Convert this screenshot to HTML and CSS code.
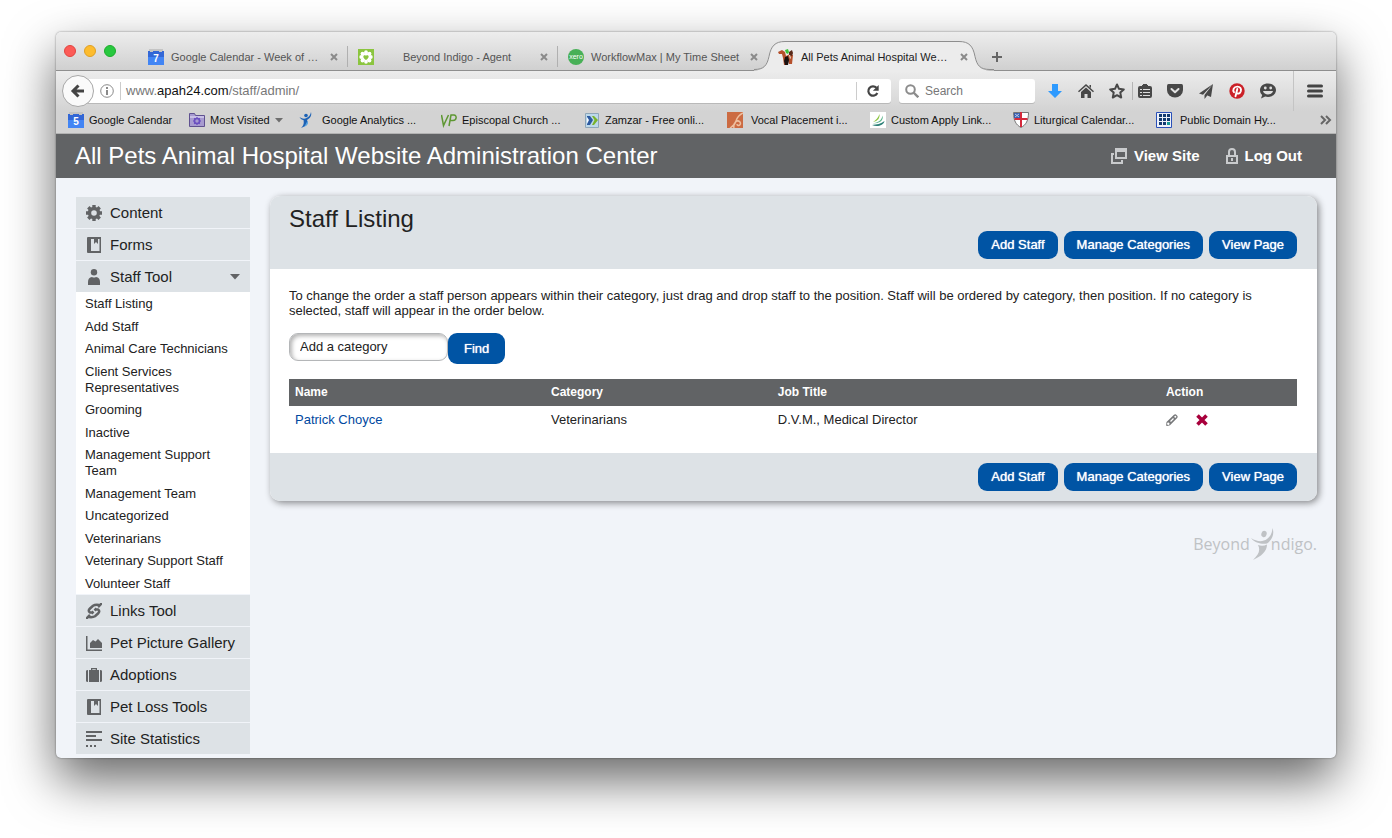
FILE: index.html
```html
<!DOCTYPE html>
<html lang="en">
<head>
<meta charset="utf-8">
<title>All Pets Animal Hospital Website Administration Center</title>
<link rel="stylesheet" href="styles.css">
</head>
<body>
<div class="window">
  <div class="tabstrip">
    <div class="lights">
      <button class="light light-red" aria-label="Close window"></button>
      <button class="light light-yellow" aria-label="Minimize window"></button>
      <button class="light light-green" aria-label="Zoom window"></button>
    </div>
    <div class="tab">
      <svg class="fav" viewBox="0 0 16 16"><path fill="#c4c4c4" d="M1 0h14v4H1z"/><path fill="#3367d6" d="M0 2h2v1h3V2h6v1h3V2h2v6H0z"/><path fill="#4285f4" d="M0 8h16v8H0z"/><text x="8" y="13" class="cal-num">7</text></svg>
      <span class="tab-title">Google Calendar - Week of …</span>
      <button class="tab-close" aria-label="Close tab"><svg viewBox="0 0 8 8"><path d="M1 1l6 6M7 1L1 7"/></svg></button>
    </div>
    <div class="tab">
      <svg class="fav" viewBox="0 0 16 16"><path fill="#8bc53f" d="M0 0h16v16H0z"/><g fill="#fff"><circle cx="8" cy="3.200" r="1.900"/><circle cx="11.500" cy="4.600" r="1.900"/><circle cx="12.800" cy="8" r="1.900"/><circle cx="11.500" cy="11.500" r="1.900"/><circle cx="8" cy="12.800" r="1.900"/><circle cx="4.500" cy="11.500" r="1.900"/><circle cx="3.200" cy="8" r="1.900"/><circle cx="4.500" cy="4.600" r="1.900"/><circle cx="8" cy="8" r="4"/></g><path fill="#8bc53f" d="M8 11C3.500 8.500 5.500 5 8 6.800c2.500-1.800 4.500 1.700 0 4.200z"/></svg>
      <span class="tab-title tab-title-center">Beyond Indigo - Agent</span>
      <button class="tab-close" aria-label="Close tab"><svg viewBox="0 0 8 8"><path d="M1 1l6 6M7 1L1 7"/></svg></button>
    </div>
    <div class="tab tab-last">
      <svg class="fav" viewBox="0 0 16 16"><circle cx="8" cy="8" r="8" fill="#48b057"/><text x="8" y="10" class="xero">xero</text></svg>
      <span class="tab-title">WorkflowMax | My Time Sheet</span>
      <button class="tab-close" aria-label="Close tab"><svg viewBox="0 0 8 8"><path d="M1 1l6 6M7 1L1 7"/></svg></button>
    </div>
    <div class="tab tab-active">
      <svg class="tab-shape" viewBox="0 0 240 30" aria-hidden="true"><path fill="#ececec" d="M0 30v-.5c10 0 13-5 15-14C17 5 21 .5 31 .5h174c10 0 14 4.500 16 15 2 9 5 14 15 14h4v.5z"/><path fill="none" stroke="#8e8e8e" d="M0 28.500c10 0 13-4 15-13C17 5 21 .5 31 .5h174c10 0 14 4.500 16 15 2 9 5 13 15 13h4"/></svg>
      <svg class="fav" viewBox="0 0 16 16"><path fill="#b5502c" d="M0 3l4-2 3 2 1 4 4-2 3 1-1 9h-3l-1-4-2 5H6L5 9 4 5 1 5z"/><path fill="#5a2a1a" d="M11 3l3-2 1 3-1 3-3-1z"/><path fill="#3cc43c" d="M7 1l3-1 1 3-1 2-2-1z"/><path fill="#181010" d="M7 8l3-1 1 4-1 5H7L6 12z"/><path fill="#e8d8c8" d="M11 6h1l1 3-1 1z"/></svg>
      <span class="tab-title">All Pets Animal Hospital We…</span>
      <button class="tab-close" aria-label="Close tab"><svg viewBox="0 0 8 8"><path d="M1 1l6 6M7 1L1 7"/></svg></button>
    </div>
    <button class="new-tab" aria-label="New tab"><svg viewBox="0 0 12 12"><path d="M6 1v10M1 6h10"/></svg></button>
  </div>

  <div class="toolbar">
    <button class="back" aria-label="Back"><svg viewBox="0 0 16 16"><path d="M14 8H3.500M8.500 2.500L3 8l5.500 5.500"/></svg></button>
    <div class="urlbar">
      <svg class="info" viewBox="0 0 14 14"><circle cx="7" cy="7" r="6.300" fill="none" stroke="#8a8a8a"/><path fill="#8a8a8a" d="M6 3h2v2H6zM6 6h2v5H6z"/></svg>
      <div class="url" role="textbox" aria-label="Address">www.<span class="url-host">apah24.com</span>/staff/admin/</div>
      <button class="reload" aria-label="Reload"><svg viewBox="0 0 14 14"><path fill="none" stroke="#444" stroke-width="2.200" d="M10.500 3.800A4.700 4.700 0 1 0 11.300 9"/><path fill="#444" d="M12.700 1v5.800H6.900z"/></svg></button>
    </div>
    <label class="search">
      <svg viewBox="0 0 14 14"><circle cx="5.500" cy="5.500" r="4.300" fill="none" stroke="#8c8c8c" stroke-width="2"/><path stroke="#8c8c8c" stroke-width="2.400" d="M8.500 8.500l4.800 4.800"/></svg>
      <input type="search" placeholder="Search" aria-label="Search">
    </label>
    <div class="tools">
      <button class="tool" aria-label="Downloads"><svg viewBox="0 0 16 16"><path fill="#2e9afe" d="M5 1h6v7h4l-7 7-7-7h4z"/></svg></button>
      <button class="tool" aria-label="Home"><svg viewBox="0 0 16 16"><path fill="#484848" d="M8 1l8 7.200-1 1L8 3 1 9.200l-1-1zM3 9l5-4.500L13 9v6H9.500v-4h-3v4H3zM11.500 2H13v3l-1.500-1.300z"/></svg></button>
      <button class="tool" aria-label="Bookmark this page"><svg viewBox="0 0 16 16"><path fill="none" stroke="#484848" stroke-width="2" stroke-linejoin="round" d="M8 1.500l2 4.300 4.800.6-3.500 3.200.9 4.900L8 12.200l-4.200 2.300.9-4.900L1.200 6.400 6 5.800z"/></svg></button>
      <button class="tool tool-list" aria-label="Bookmarks list"><svg viewBox="0 0 16 16"><path fill="#484848" fill-rule="evenodd" d="M3 3h2V2h1V1h4v1h1v1h2q2 0 2 2v8q0 2-2 2H3q-2 0-2-2V5q0-2 2-2zm0 3v1h2V6zm3 0v1h7V6zM3 9v1h2V9zm3 0v1h7V9zm-3 3v1h2v-1zm3 0v1h7v-1z"/></svg></button>
      <button class="tool" aria-label="Pocket"><svg viewBox="0 0 16 16"><path fill="#484848" d="M1.500 1h13Q16 1 16 3v4a8 7.500 0 0 1-16 0V3q0-2 1.500-2z"/><path fill="none" stroke="#e4e4e4" stroke-width="2" stroke-linecap="round" stroke-linejoin="round" d="M4.500 6L8 9.300 11.500 6"/></svg></button>
      <button class="tool" aria-label="Send"><svg viewBox="0 0 16 16"><path fill="#484848" d="M15 1L1 10.500l4 1.200zM15 1L6.500 12v4l2.200-2.800zM15 1L8.200 12l4.800 2z"/></svg></button>
      <button class="tool" aria-label="Pin it"><svg viewBox="0 0 16 16"><circle cx="8" cy="8" r="7.700" fill="#cb2027"/><path fill="none" stroke="#fff" stroke-width="1.900" stroke-linecap="round" d="M5 9.300C3.400 7 4.700 3.600 8.300 3.600c3 0 4.200 2.400 3.500 4.600-.9 2.600-3 3-4.300 1.600M8.300 6L6.500 13.300"/></svg></button>
      <button class="tool" aria-label="Chat"><svg viewBox="0 0 16 16"><path fill="#484848" d="M8 .5c4.500 0 8 2.700 8 6.500 0 3.900-3.500 7-8 7-1 0-2-.1-2.800-.4L1 15.500 2.200 12C.8 10.900 0 9.200 0 7 0 3.200 3.500.5 8 .5z"/><circle cx="5.300" cy="5" r="1.400" fill="#e0e0e0"/><circle cx="10.700" cy="5" r="1.400" fill="#e0e0e0"/><path fill="#e0e0e0" d="M3 8h10c-.8 4.500-9.200 4.500-10 0z"/></svg></button>
    </div>
    <button class="menu" aria-label="Open menu"><svg viewBox="0 0 16 14"><path stroke="#444" stroke-width="3" stroke-linecap="round" d="M1.500 2h13M1.500 7h13M1.500 12h13"/></svg></button>
  </div>

  <nav class="bookmarks" aria-label="Bookmarks">
    <a class="bm bm-auto" href="#"><svg class="fav" viewBox="0 0 16 16"><path fill="#c4c4c4" d="M1 0h14v4H1z"/><path fill="#3367d6" d="M0 2h2v1h3V2h6v1h3V2h2v6H0z"/><path fill="#4285f4" d="M0 8h16v8H0z"/><text x="8" y="13" class="cal-num">5</text></svg>Google Calendar</a>
    <a class="bm bm-folder" href="#"><svg class="fav" viewBox="0 0 16 16"><path fill="#a79bd0" stroke="#5f5190" d="M.5 14.500v-13h5l1 2h9v11z"/><path fill="#c9c1e6" d="M1 4h14v2H1z"/><circle cx="8" cy="9" r="2.500" fill="none" stroke="#6a4fc0" stroke-width="1.600"/><path stroke="#6a4fc0" stroke-width="1.200" d="M8 5v1.500M8 11.500V13M4 9h1.500M10.500 9H12M5.200 6.200l1 1M9.800 10.800l1 1M10.800 6.200l-1 1M6.200 10.800l-1 1"/></svg>Most Visited<svg class="caret" viewBox="0 0 8 5"><path fill="#6e6e6e" d="M0 0h8L4 4.500z"/></svg></a>
    <a class="bm bm-spaced" href="#"><svg class="fav" viewBox="0 0 16 16"><circle cx="8" cy="3.500" r="1.800" fill="#1d62b5"/><path fill="#1d62b5" d="M13 0c1 4-1 6-4 8 2 4-1 6-6 8 3-3 3-5 2.500-8C4 8 2.500 7 1.500 5c3 2 5 2 7 1 2.500-1 4-3 4.500-6z"/><path fill="#5aa5e0" d="M9.500 9c1.500 3-1 5-3.500 5.800 2-2 2-4 3.500-5.800z"/></svg>Google Analytics ...</a>
    <a class="bm" href="#"><svg class="fav" viewBox="0 0 16 16"><path fill="none" stroke="#5d9732" stroke-width="1.500" d="M.5 3l2 10.500L7.500 3M8 14l2-11h3c3 0 3 5.500-1 5.500H9.200"/></svg>Episcopal Church ...</a>
    <a class="bm" href="#"><svg class="fav" viewBox="0 0 16 16"><path fill="#bcd8ea" stroke="#8ea6b8" d="M1.500 1.500h13v14h-13z"/><path fill="#2c5aa0" d="M3 4h3l3 4-3 5H3z"/><path fill="#f4faff" d="M3 5l2 3-2 4z"/><path fill="#7ab32a" d="M8 4h2l4 4-4 5H8l2.500-5z"/></svg>Zamzar - Free onli...</a>
    <a class="bm bm-spaced" href="#"><svg class="fav" viewBox="0 0 16 16"><path fill="#cc6b42" d="M0 0h16v16H0z"/><path fill="none" stroke="#eebf9f" stroke-width="1.500" d="M16 1C12 3 10 6 9 9c-1 4-3 5-6 7M7 16c-1-5 3-9 6-6 2 3-3 5-3 2"/></svg>Vocal Placement i...</a>
    <a class="bm" href="#"><svg class="fav" viewBox="0 0 16 16"><path fill="#fff" d="M0 0h16v16H0z"/><path fill="#8cc63f" d="M3 10c3-2 5-4 6.500-8 .5 4-1.500 7-6.500 8z"/><path fill="#5cb58c" d="M2.500 11.500c6-1 9-3 10-8 1.500 5-3 8-10 8z"/><path fill="#2c7f77" d="M2 13c5-.5 9-1 12.500-4-1 5-8 6-12.500 4z"/></svg>Custom Apply Link...</a>
    <a class="bm" href="#"><svg class="fav" viewBox="0 0 16 16"><path fill="#fff" stroke="#777" d="M.5.500h15c0 8-2.500 12.500-7.500 15C3 13 .5 8.500.5.500z"/><path fill="#3a5fae" d="M1 1h6v5H1z"/><path stroke="#d42a3c" stroke-width="2" d="M8 0v15M1.500 7h13"/><path stroke="#b9c8ea" d="M2 2l4 3M6 2L2 5"/></svg>Liturgical Calendar...</a>
    <a class="bm bm-spaced" href="#"><svg class="fav" viewBox="0 0 16 16"><path fill="#eef2fa" stroke="#2a50b8" d="M.5.500h15v15H.5z"/><path fill="#123a70" d="M3 2h3v3H3zM7 2h3v3H7zM11 2h3v3h-3zM3 6h3v3H3zM7 6h3v3H7zM11 6h3v3h-3zM3 10h3v3H3zM7 10h3v3H7z"/><path fill="#139a94" d="M11 10h3v3h-3z"/></svg>Public Domain Hy...</a>
    <button class="more" aria-label="More bookmarks"><svg viewBox="0 0 12 10"><path d="M1 1l4 4-4 4M6 1l4 4-4 4"/></svg></button>
  </nav>

  <header class="site-head">
    <h1>All Pets Animal Hospital Website Administration Center</h1>
    <nav class="site-links">
      <a href="#"><svg class="ico-view" viewBox="0 0 16 16"><path fill="#c9cbcd" fill-rule="evenodd" d="M4 0h12v11H4zM6 4v5h8V4zM0 5h3v2H2v7h8v-2h2v4H0z"/></svg>View Site</a>
      <a href="#"><svg class="ico-lock" viewBox="0 0 12 16"><path fill="none" stroke="#c9cbcd" stroke-width="2" d="M1 8h10v7H1zM3 8V4q0-3 3-3t3 3v4"/><path fill="#c9cbcd" d="M5 10h2v3H5z"/></svg>Log Out</a>
    </nav>
  </header>

  <div class="page">
    <nav class="sidebar" aria-label="Tools">
      <a class="side-item" href="#"><svg viewBox="0 0 16 16"><circle cx="8" cy="8" r="4.500" fill="none" stroke="#616365" stroke-width="3.400"/><path stroke="#616365" stroke-width="3.400" d="M8 0v3M8 13v3M0 8h3M13 8h3M2.300 2.300l2.200 2.200M11.500 11.500l2.200 2.200M13.700 2.300l-2.200 2.200M4.500 11.500l-2.200 2.200"/></svg>Content</a>
      <a class="side-item" href="#"><svg viewBox="0 0 16 16"><path fill="#616365" fill-rule="evenodd" d="M2 0h13v16H2q-1 0-1-1V1q0-1 1-1zM5 2v12h8.500V2H12v5l-2-2-2 2V2z"/></svg>Forms</a>
      <a class="side-item" href="#"><svg viewBox="0 0 16 16"><circle cx="8" cy="3.200" r="3.200" fill="#616365"/><path fill="#616365" d="M2 16v-3q0-4.500 4-5 2 1 4 0 4 .5 4 5v3z"/></svg>Staff Tool<svg class="side-caret" viewBox="0 0 10 6"><path fill="#616365" d="M0 0h10L5 5.500z"/></svg></a>
      <ul class="submenu">
        <li><a href="#">Staff Listing</a></li>
        <li><a href="#">Add Staff</a></li>
        <li><a href="#">Animal Care Technicians</a></li>
        <li><a href="#">Client Services Representatives</a></li>
        <li><a href="#">Grooming</a></li>
        <li><a href="#">Inactive</a></li>
        <li><a href="#">Management Support Team</a></li>
        <li><a href="#">Management Team</a></li>
        <li><a href="#">Uncategorized</a></li>
        <li><a href="#">Veterinarians</a></li>
        <li><a href="#">Veterinary Support Staff</a></li>
        <li><a href="#">Volunteer Staff</a></li>
      </ul>
      <a class="side-item" href="#"><svg viewBox="0 0 16 16"><path fill="none" stroke="#616365" stroke-width="2.500" d="M10.500 5.500L8.500 7.500M7 9.500H4Q1.500 8 4 5.500L7 2.800q2-1.300 6-.8M5.500 10.500L7.500 8.500M9 6.500h3Q14.500 8 12 10.500L9 13.200q-2 1.300-6 .8M16 0l-4 4M0 16l4-4"/></svg>Links Tool</a>
      <a class="side-item" href="#"><svg viewBox="0 0 16 16"><path fill="#616365" d="M0 1h1.500v13.500H16V16H0zM4 13V8l3-3 2.500 1.500L12 4l4 4v5z"/></svg>Pet Picture Gallery</a>
      <a class="side-item" href="#"><svg viewBox="0 0 16 16"><path fill="#616365" fill-rule="evenodd" d="M5 3V1h6v2h2v12H3V3zm1.300 0h3.400v-.8H6.300zM0 4q0-1 2-1v12q-2 0-2-1zM16 4q0-1-2-1v12q2 0 2-1z"/></svg>Adoptions</a>
      <a class="side-item" href="#"><svg viewBox="0 0 16 16"><path fill="#616365" fill-rule="evenodd" d="M2 0h13v16H2q-1 0-1-1V1q0-1 1-1zM5 2v12h8.500V2H12v5l-2-2-2 2V2z"/></svg>Pet Loss Tools</a>
      <a class="side-item" href="#"><svg viewBox="0 0 16 16"><path fill="#616365" d="M0 0h16v2H0zM0 4h10v2H0zM0 8h16v2H0zM0 14h2v2H0zM4 14h2v2H4zM8 14h2v2H8z"/></svg>Site Statistics</a>
    </nav>

    <main class="main">
      <section class="panel">
        <div class="panel-head">
          <h2>Staff Listing</h2>
          <div class="actions">
            <button class="btn">Add Staff</button>
            <button class="btn">Manage Categories</button>
            <button class="btn">View Page</button>
          </div>
        </div>
        <div class="panel-body">
          <p>To change the order a staff person appears within their category, just drag and drop staff to the position. Staff will be ordered by category, then position. If no category is selected, staff will appear in the order below.</p>
          <form class="find">
            <input class="category" type="text" value="Add a category" aria-label="Category">
            <button class="btn btn-find" type="button">Find</button>
          </form>
          <table class="staff">
            <thead>
              <tr><th class="c-name">Name</th><th class="c-cat">Category</th><th class="c-job">Job Title</th><th>Action</th></tr>
            </thead>
            <tbody>
              <tr>
                <td><a href="#">Patrick Choyce</a></td>
                <td>Veterinarians</td>
                <td>D.V.M., Medical Director</td>
                <td>
                  <div class="row-actions">
                    <button aria-label="Edit"><svg viewBox="0 0 12 12"><path fill="#77787a" d="M.5 8L8 .8Q9 0 10 .5l1.500 1.500Q12 3 11.200 4L4 11.300 1 12Q0 12 .2 11z"/><path stroke="#fff" stroke-width="1.200" d="M4.500 7.500l3-3"/><circle cx="2.300" cy="9.700" r="1.200" fill="#fff"/><circle cx="9.300" cy="2.700" r="1" fill="#fff"/></svg></button>
                    <button aria-label="Delete"><svg viewBox="0 0 12 12"><path stroke="#a8003c" stroke-width="3.600" d="M1.500 1.500l9 9M10.500 1.500l-9 9"/></svg></button>
                  </div>
                </td>
              </tr>
            </tbody>
          </table>
        </div>
        <div class="panel-foot">
          <div class="actions">
            <button class="btn">Add Staff</button>
            <button class="btn">Manage Categories</button>
            <button class="btn">View Page</button>
          </div>
        </div>
      </section>
      <div class="brand">Beyond<svg viewBox="0 0 24 32"><ellipse cx="14" cy="6" rx="2.600" ry="3.200" fill="#bfc2c5" transform="rotate(20 14 6)"/><path fill="#bfc2c5" d="M1 10c6 4 12 4 16 1 4-3 5-6 5.500-11C25 7 21 13 17 15.500c-4 1-12 0-16-5.500zM8 17c3 1 6 1 9-.5 0 7-6 12-14 15.500 5-5 8-9 5-15z"/></svg>ndigo.</div>
    </main>
  </div>
</div>
</body>
</html>
```
FILE: styles.css
```css
* { box-sizing: border-box; }

body {
  margin: 0;
  padding: 32px 56px 80px;
  background: #fff;
  color: #222;
  font: 13px/16px "Liberation Sans", Arial, sans-serif;
}

button {
  margin: 0;
  padding: 0;
  border: 0;
  background: none;
  color: inherit;
  font: inherit;
}

a { color: inherit; text-decoration: none; }
svg { display: block; flex: none; }

.window {
  border-radius: 5px;
  background: #f1f4f9;
  box-shadow: 0 0 2px rgba(0, 0, 0, .5), 0 22px 50px rgba(0, 0, 0, .6);
}

/* Tab strip */
.tabstrip {
  display: flex;
  align-items: flex-end;
  height: 39px;
  border-bottom: 1px solid #8e8e8e;
  border-radius: 5px 5px 0 0;
  background: linear-gradient(#ededed, #d0d0d0);
}

.lights {
  display: flex;
  flex: 0 0 82px;
  align-self: center;
  gap: 8px;
  padding-left: 8px;
}

.light { width: 12px; height: 12px; border-radius: 50%; }
.light-red { background: #fc5b57; border: 1px solid #e2443f; }
.light-yellow { background: #fdbc2e; border: 1px solid #e0a023; }
.light-green { background: #28c83f; border: 1px solid #1dad2c; }

.tab {
  position: relative;
  display: flex;
  align-items: center;
  flex: 0 1 210px;
  gap: 7px;
  height: 27px;
  padding: 0 10px;
  color: #555;
}

.tab::after {
  content: "";
  position: absolute;
  right: 0;
  bottom: 3px;
  width: 1px;
  height: 21px;
  background: #b0b0b0;
}

.tab-last::after, .tab-active::after { display: none; }
.fav { width: 16px; height: 16px; }
.tab .fav, .tab-title, .tab-close { position: relative; }
.tab-title { flex: 1; font-size: 11px; white-space: nowrap; }
.tab-title-center { text-align: center; }
.tab-close svg { width: 8px; height: 8px; fill: none; stroke: #8a8a8a; stroke-width: 2; }
.tab-active { color: #222; }

.tab .tab-shape {
  position: absolute;
  left: -14px;
  bottom: -1px;
  width: 240px;
  height: 30px;
}

.new-tab { padding: 0 0 7px 13px; }
.new-tab svg { width: 12px; height: 12px; stroke: #666; stroke-width: 2; }

.cal-num { fill: #fff; font-size: 10px; font-weight: bold; text-anchor: middle; }
.xero { fill: #fff; font-size: 7px; text-anchor: middle; }

/* Navigation toolbar */
.toolbar {
  display: flex;
  align-items: center;
  height: 40px;
  padding-left: 6px;
  background: linear-gradient(#ececec, #d3d3d3);
}

.back {
  z-index: 1;
  display: grid;
  place-items: center;
  flex: none;
  width: 32px;
  height: 32px;
  margin-right: -16px;
  border: 1px solid #a8a8a8;
  border-radius: 50%;
  background: #fafafa;
}

.back svg { width: 16px; height: 16px; fill: none; stroke: #444; stroke-width: 3; }

.urlbar {
  display: flex;
  align-items: center;
  flex: 1;
  height: 24px;
  margin-right: 8px;
  padding-left: 22px;
  border-radius: 3px;
  background: #fff;
  box-shadow: 0 1px 0 #b9b9b9;
}

.info { width: 14px; height: 14px; }

.url {
  flex: 1;
  margin-left: 6px;
  padding-left: 5px;
  border-left: 1px solid #ccc;
  color: #777;
  line-height: 18px;
}

.url-host { color: #111; }
.reload { padding: 2px 11px 2px 9px; border-left: 1px solid #ccc; }
.reload svg { width: 14px; height: 14px; }

.search {
  display: flex;
  align-items: center;
  flex: none;
  width: 136px;
  gap: 6px;
  height: 24px;
  padding: 0 6px;
  border-radius: 3px;
  background: #fff;
  box-shadow: 0 1px 0 #b9b9b9;
}

.search svg { width: 14px; height: 14px; }

.search input {
  flex: 1;
  width: 100%;
  min-width: 0;
  padding: 0;
  border: 0;
  outline: 0;
  font: 12px/18px "Liberation Sans", Arial, sans-serif;
}

.search input::placeholder { color: #777; }

.tools { display: flex; align-items: center; padding: 0 10px 0 4px; }
.tool { display: grid; place-items: center; width: 31px; height: 18px; }
.tool svg { width: 16px; height: 16px; }
.tool-list { width: 24px; margin-right: 3px; border-left: 1px solid #b4b4b4; }

.menu {
  display: grid;
  place-items: center;
  align-self: stretch;
  width: 43px;
  border-left: 1px solid #c4c4c4;
}

.menu svg { width: 16px; height: 14px; }

/* Bookmarks bar */
.bookmarks {
  display: flex;
  align-items: center;
  gap: 16px;
  height: 23px;
  padding: 0 4px 4px 12px;
  border-bottom: 1px solid #b2b2b2;
  background: #d3d3d3;
  color: #111;
  font-size: 11px;
  white-space: nowrap;
}

.bm { display: flex; align-items: center; flex: 0 1 127px; gap: 5px; min-width: 0; }
.bm-auto { flex-basis: 105px; }
.bm-folder { flex-basis: 93px; }
.bm-spaced { gap: 8px; }
.caret { width: 8px; height: 5px; }
.more { margin-left: auto; }
.more svg { width: 12px; height: 10px; fill: none; stroke: #666; stroke-width: 2; }

/* Site header */
.site-head {
  display: flex;
  align-items: center;
  justify-content: space-between;
  height: 44px;
  padding: 0 34px 0 19px;
  background: #616365;
  color: #fff;
}

.site-head h1 { margin: 0; font-size: 24px; font-weight: normal; line-height: 28px; }
.site-links { display: flex; gap: 26px; font-size: 15px; font-weight: bold; }
.site-links a { display: flex; align-items: center; gap: 7px; }
.ico-view { width: 16px; height: 16px; }
.ico-lock { width: 12px; height: 16px; }

/* Page */
.page { display: flex; gap: 20px; padding: 18px 19px 4px 20px; }

.sidebar {
  display: flex;
  flex: 0 0 174px;
  flex-direction: column;
  gap: 1px;
  padding-top: 1px;
}

.side-item {
  display: flex;
  align-items: center;
  gap: 8px;
  height: 31px;
  padding: 0 10px;
  background: #dde2e6;
  font-size: 15px;
  white-space: nowrap;
}

.side-item svg { width: 16px; height: 16px; }
.side-item .side-caret { width: 10px; height: 6px; margin-left: auto; }

.submenu {
  display: flex;
  flex-direction: column;
  justify-content: space-between;
  min-height: 302px;
  margin: -1px 0 0;
  padding: 4px 9px 2px;
  background: #fff;
  list-style: none;
}

.main { flex: 1; min-width: 0; }

.panel {
  overflow: hidden;
  border-radius: 10px;
  background: #fff;
  box-shadow: 2px 2px 7px rgba(0, 0, 0, .45);
}

.panel-head { padding: 10px 20px 10px 19px; background: #dde2e6; }
.panel-head h2 { margin: 0; font-size: 24px; font-weight: normal; line-height: 25px; }
.panel-foot { padding: 10px 20px 10px 19px; background: #dde2e6; }

.actions { display: flex; justify-content: flex-end; gap: 6px; }

.btn {
  height: 28px;
  padding: 0 13px;
  border-radius: 9px;
  background: #0054a4;
  color: #fff;
  text-shadow: 0 0 1px #fff;
}

.panel-body { padding: 19px 20px 19px 19px; }
.panel-body p { margin: 0 0 15px; line-height: 15px; }
.find { display: flex; align-items: flex-start; margin-bottom: 15px; }

.category {
  width: 159px;
  height: 28px;
  padding: 0 10px 2px;
  border: 1px solid #b4b6b8;
  border-radius: 9px;
  background: #fff;
  box-shadow: inset 2px 2px 4px rgba(0, 0, 0, .3);
  color: #222;
  font: inherit;
}

.btn-find { height: 31px; padding: 0 16px; }

.staff { width: 100%; border-collapse: collapse; table-layout: fixed; }
.staff th { height: 27px; padding: 0 6px 2px; background: #616365; color: #fff; font-size: 12px; text-align: left; }
.staff td { height: 28px; padding: 0 6px; }
.staff a { color: #0048a0; }
.c-name { width: 25.4%; }
.c-cat { width: 22.5%; }
.c-job { width: 38.5%; }

.row-actions { display: flex; gap: 18px; }
.row-actions svg { width: 12px; height: 12px; }

.brand {
  display: flex;
  align-items: center;
  justify-content: flex-end;
  margin-top: 26px;
  color: #bfc2c5;
  font: 16px/34px "Open Sans", sans-serif;
}

.brand svg { width: 24px; height: 32px; margin-right: -3px; }
```
